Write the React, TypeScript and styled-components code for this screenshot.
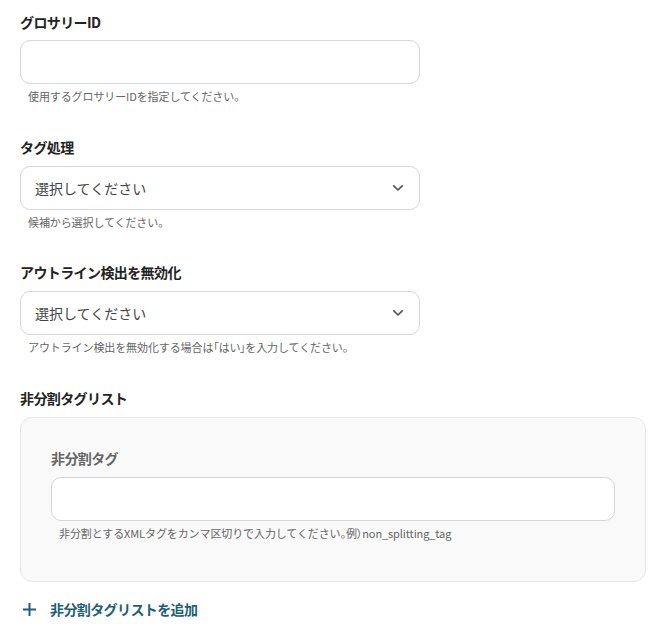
import React from "react";
import styled, { createGlobalStyle } from "styled-components";

const GlobalStyle = createGlobalStyle`
  body {
    margin: 0;
    background: #ffffff;
    font-family: "Noto Sans CJK JP", "Noto Sans", sans-serif;
    color: #222222;
  }
`;

const Page = styled.div`
  padding: 12px 20px 0;
  display: flex;
  flex-direction: column;
`;

const Field = styled.div<{ $wide?: boolean; $space?: number }>`
  display: flex;
  flex-direction: column;
  width: ${(p) => (p.$wide ? "100%" : "400px")};
  margin-bottom: ${(p) => p.$space ?? 33}px;
`;

const Label = styled.div<{ $muted?: boolean; $gap?: number }>`
  font-size: 14px;
  line-height: 20px;
  font-weight: 700;
  letter-spacing: -0.6px;
  color: ${(p) => (p.$muted ? "#666666" : "#222222")};
  margin-bottom: ${(p) => p.$gap ?? 8}px;
`;

const Box = styled.div`
  box-sizing: border-box;
  height: 44px;
  border: 1px solid #d3d6dc;
  border-radius: 10px;
  background: #ffffff;
  display: flex;
  align-items: center;
  justify-content: space-between;
  padding: 0 15px 0 14px;
`;

const Placeholder = styled.span`
  font-size: 14px;
  color: #444444;
`;

const Help = styled.div`
  font-size: 11px;
  line-height: 16px;
  color: #666666;
  margin-top: 4px;
  padding-left: 8px;
  letter-spacing: -0.1px;
`;

// punctuation set half-width inside help text
const Quote = styled.span`
  font-feature-settings: "palt";
`;

const Panel = styled.div`
  box-sizing: border-box;
  width: 626px;
  border: 1px solid #e6e7e9;
  border-radius: 12px;
  background: #f9f9f9;
  padding: 30px 30px 40px;
`;

const AddButton = styled.button`
  margin-top: 17px;
  align-self: flex-start;
  display: flex;
  align-items: center;
  gap: 13px;
  padding: 0 0 0 2px;
  border: none;
  background: none;
  font-family: inherit;
  font-size: 14px;
  line-height: 20px;
  font-weight: 700;
  letter-spacing: -0.6px;
  color: #1e5f76;
  cursor: pointer;
`;

const Chevron = () => (
  <svg width="12" height="8" viewBox="0 0 12 8" fill="none">
    <path d="M1.8 1.8 6 6l4.2-4.2" stroke="#555" strokeWidth="1.7" strokeLinecap="round" strokeLinejoin="round" />
  </svg>
);

const Plus = () => (
  <svg width="15" height="15" viewBox="0 0 15 15" fill="none">
    <path d="M7.5 1v13M1 7.5h13" stroke="#1e5f76" strokeWidth="2" />
  </svg>
);

export default function App() {
  return (
    <>
      <GlobalStyle />
      <Page>
        <Field>
          <Label>グロサリーID</Label>
          <Box />
          <Help>使用するグロサリーIDを指定してください。</Help>
        </Field>

        <Field $space={32}>
          <Label $gap={9}>タグ処理</Label>
          <Box>
            <Placeholder>選択してください</Placeholder>
            <Chevron />
          </Box>
          <Help>候補から選択してください。</Help>
        </Field>

        <Field>
          <Label $gap={9}>アウトライン検出を無効化</Label>
          <Box>
            <Placeholder>選択してください</Placeholder>
            <Chevron />
          </Box>
          <Help>
            アウトライン検出を無効化する場合は<Quote>「はい」</Quote>を入力してください。
          </Help>
        </Field>

        <Label $gap={9}>非分割タグリスト</Label>
        <Panel>
          <Field $wide $space={0}>
            <Label $muted $gap={9}>非分割タグ</Label>
            <Box />
            <Help>
              非分割とするXMLタグをカンマ区切りで入力してください<Quote>。例）</Quote>non_splitting_tag
            </Help>
          </Field>
        </Panel>

        <AddButton>
          <Plus />
          非分割タグリストを追加
        </AddButton>
      </Page>
    </>
  );
}
